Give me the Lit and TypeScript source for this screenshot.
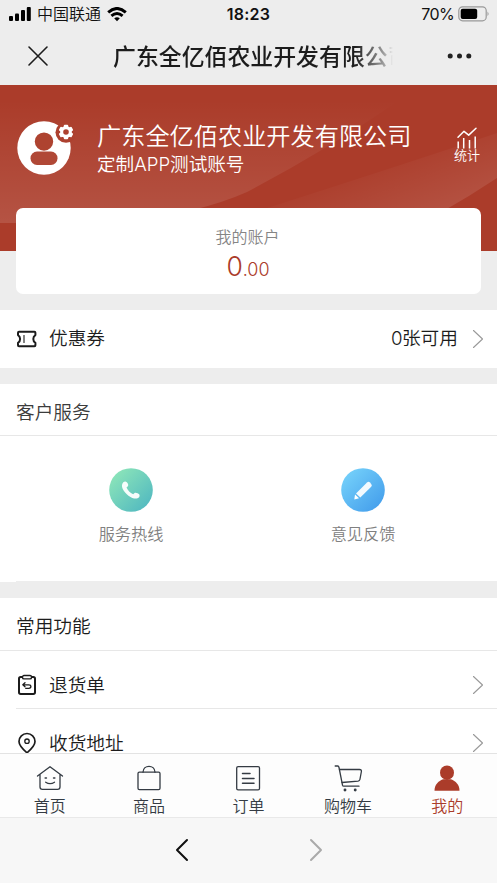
import { LitElement, html, svg, css } from "lit";
import { customElement } from "lit/decorators.js";
import { classMap } from "lit/directives/class-map.js";

const couponIcon = svg`<path d="M3 3.800h15.400q1 0 1 1v2.300q-2.100 1.200-2.100 3.900t2.100 3.900v2.300q0 1-1 1H3q-1 0-1-1v-2.300q2.100-1.200 2.100-3.900T2 7.100V4.800q0-1 1-1z"/><path d="M8 7.500v7" stroke-width="1.100"/>`;
const returnIcon = svg`<rect x="3" y="3" width="16" height="17" rx="1.700"/><rect x="6.500" y="1.500" width="9" height="3.400" rx="1.500" fill="#fff" stroke-width="1.400"/><path d="M9 8.800 6.800 10.800l2.200 2M7 10.800h5.800q2.100 0 2.100 1.800t-2.100 1.800h-3" stroke-width="1.300"/>`;
const pinIcon = svg`<path d="M11 20.800C7.500 17.800 3 13.900 3 9.500a8 8 0 0 1 16 0c0 4.400-4.500 8.300-8 11.300z" stroke-width="1.700"/><circle cx="11" cy="9.200" r="2.200" stroke-width="1.300"/>`;

const tabs = [
  { label: "首页", icon: svg`<path d="M2.500 11 15 1.700 27.500 11M5 9.400V22q0 2.400 2.400 2.400h15.200Q25 24.400 25 22V9.400"/><path d="M10.700 17.200q4.300 3 8.800 0"/><path d="M10.200 13h1.200M18.600 13h1.200" stroke-width="1.600"/>` },
  { label: "商品", icon: svg`<rect x="4" y="7.200" width="22" height="17.400" rx="1.400"/><path d="M9 7.200C9.300-.6 20.700-.6 21 7.200"/>` },
  { label: "订单", icon: svg`<rect x="3.700" y="1.700" width="22.800" height="23.200" rx="1.400"/><path d="M9.500 8.500h7.500M9.500 13.500h11.500M9.500 18.300h11.500" stroke-width="1.500"/>` },
  { label: "购物车", icon: svg`<path d="M2.200 1h2.500q1 0 1.300 1.500L9.500 20.200q.3 1 1.300 1H26"/><path d="M6.500 4.500h20q2.200 0 1.900 2l-1.500 8q-.3 1.500-1.900 1.700L9 17.500"/><circle cx="12" cy="25" r=".8" fill="currentColor"/><circle cx="22.200" cy="25" r=".8" fill="currentColor"/>` },
  { label: "我的", active: true, icon: svg`<g fill="currentColor" stroke="none"><ellipse cx="15" cy="7.700" rx="7" ry="7.200"/><path d="M2.500 25.700c0-6.200 3.900-9.400 8.500-11.400h8c4.600 2 8.500 5.200 8.500 11.400z"/></g>` },
];

@customElement("app-root")
export class AppRoot extends LitElement {
  static styles = css`
    :host { display: flex; flex-direction: column; width: 100%; height: 883px; overflow: hidden; background: #ededed; color: #1c1c1c;
      font-family: Inter, "Noto Sans CJK SC", sans-serif; font-size: 18.700px; line-height: 1; font-weight: 350; }
    * { box-sizing: border-box; }
    svg { display: block; flex: none; fill: none; stroke: currentColor; stroke-linecap: round; stroke-linejoin: round; }
    .status { height: 28px; flex: none; display: grid; grid-template-columns: 1fr auto 1fr; align-items: center; padding: 0 8px; font-size: 16px; color: #111; font-weight: 400; }
    .left, .right { display: flex; align-items: center; }
    .left { gap: 6px; }
    .carrier { font-weight: 350; }
    .right { justify-content: flex-end; gap: 4px; letter-spacing: -.6px; }
    .time { font-weight: 600; letter-spacing: .2px; }
    .nav { height: 57px; flex: none; display: flex; align-items: center; padding: 0 25px 2px 27px; }
    .title { width: 280px; margin: 2px auto 0 64px; overflow: hidden; white-space: nowrap; font-size: 22.900px; line-height: 34px; font-weight: 500; color: #1c1c1c;
      -webkit-mask-image: linear-gradient(90deg, #000 242px, rgba(0, 0, 0, .4) 270px, transparent 280px); }
    .hero { height: 166px; flex: none; position: relative; background: #ab3c2a; color: #fff; }
    .art { position: absolute; inset: 0; stroke: none; }
    .profile { position: relative; height: 123px; display: flex; padding: 0 16px; }
    .avatar { margin-top: 34px; }
    .names { margin: 39px auto 0 22px; white-space: nowrap; }
    .company { font-size: 24.200px; line-height: 25px; }
    .account { font-size: 18.600px; line-height: 22px; margin-top: 4px; }
    .stats { margin: 42px 1px 0 0; width: 26px; display: flex; flex-direction: column; align-items: center; font-size: 13px; white-space: nowrap; }
    .card { position: relative; height: 86px; flex: none; margin: -43px 16px 16px; border-radius: 7px; background: #fff; text-align: center; padding-top: 19px; }
    .caption { font-size: 16px; line-height: 20px; color: #858585; margin-left: -2px; }
    .amount { color: #ab3c2a; font-size: 26.500px; line-height: 32px; margin: 3px 0 0 -1px; }
    .cents { font-size: 18px; }
    .row { height: 58px; flex: none; display: flex; align-items: center; background: #fff; padding: 0 13px 0 16px; }
    .label { margin: 0 auto 0 11px; }
    .value { margin-right: 14px; }
    .digit { letter-spacing: -.7px; }
    .chevron { color: #999; }
    .gap { height: 16px; flex: none; }
    .heading { height: 52px; flex: none; padding: 7px 16px 0; display: flex; align-items: center; background: #fff; border-bottom: 1px solid #e7e7e7; }
    .heading.tall { height: 53px; }
    .soft { color: #3c3c3c; }
    .services { height: 145px; flex: none; display: grid; grid-template-columns: 232px 232px; padding-left: 15px; background: #fff; }
    .service { display: flex; flex-direction: column; align-items: center; gap: 14px; padding-top: 32px; color: #808080; font-size: 16.200px; }
    .service svg { stroke: none; }
    .band { height: 17px; flex: none; }
    .notch { width: 16px; height: 1px; background: #fff; }
    .list { height: 102px; flex: none; overflow: hidden; background: #fff; }
    .rule { height: 1px; margin-left: 16px; background: #e7e7e7; }
    .list .row { height: 57px; padding-top: 10px; }
    .list .row.next { height: 58px; }
    .list .label { padding-top: 3px; }
    .tabs { height: 65px; flex: none; display: grid; grid-template-columns: repeat(5, 1fr); background: #fdfdfd; border-top: 1px solid #e3e3e3; border-bottom: 1px solid #e9e9e9; }
    .tab { display: flex; flex-direction: column; align-items: center; gap: 6px; padding-top: 11px; font-size: 16px; color: #343b43; }
    .tab.active { color: #ab3c2a; }
    .browser { flex: 1; background: #f7f7f7; display: flex; justify-content: center; align-items: center; gap: 120px; padding-bottom: 1px; }
    .back { color: #111; }
    .forward { color: #aaa; }
  `;

  chevron() {
    return html`<svg class="chevron" width="12" height="20" viewBox="0 0 12 20" stroke-width="1.1"><path d="m1.500 1.500 9 8.500-9 8.500"/></svg>`;
  }

  icon(shape: unknown) {
    return html`<svg width="22" height="22" viewBox="0 0 22 22" stroke-width="2">${shape}</svg>`;
  }

  render() {
    return html`
      <div class="status">
        <div class="left">
          <svg width="23" height="16" viewBox="0 0 23 16"><g fill="#000" stroke="none"><rect x="1" y="10" width="4" height="5" rx="1"/><rect x="7" y="7.500" width="4" height="7.500" rx="1"/><rect x="13" y="4" width="4" height="11" rx="1"/><rect x="18.800" y="1" width="4" height="14" rx="1"/></g></svg>
          <span class="carrier">中国联通</span>
          <svg width="20" height="15" viewBox="0 0 20 15" stroke-width="2.900"><g stroke="#000" stroke-linecap="butt"><path d="M1.200 5.400Q10-2.500 18.800 5.400M4.400 8.900Q10 4 15.600 8.900"/><path d="M7.200 11.300Q10 9 12.800 11.300L10 14.200z" fill="#000" stroke="none"/></g></svg>
        </div>
        <span class="time">18:23</span>
        <div class="right"><span>70%</span>
          <svg width="31" height="16" viewBox="0 0 31 16"><rect x=".8" y=".8" width="27.400" height="14" rx="3.800" stroke="#999" stroke-width="1.200"/><rect x="2.700" y="2.700" width="16.500" height="10.200" rx="2" fill="#000" stroke="none"/><path d="M29.500 5.500q2.200 2.300 0 4.600z" fill="#999" stroke="none"/></svg>
        </div>
      </div>
      <div class="nav">
        <svg width="22" height="22" viewBox="0 0 22 22" stroke="#222" stroke-width="1.600"><path d="m2 2 18 18M20 2 2 20"/></svg>
        <div class="title">广东全亿佰农业开发有限公司</div>
        <svg width="25" height="6" viewBox="0 0 25 6"><g fill="#222" stroke="none"><circle cx="3.200" cy="3" r="2.500"/><circle cx="12.500" cy="3" r="2.500"/><circle cx="21.800" cy="3" r="2.500"/></g></svg>
      </div>
      <div class="hero">
        <svg class="art" width="497" height="166" viewBox="0 0 497 166">
          <defs>
            <linearGradient id="veil" x1="0" y1="0" x2="0" y2="1"><stop offset="0" stop-color="#fff" stop-opacity="0"/><stop offset="1" stop-color="#fff" stop-opacity=".12"/></linearGradient>
            <linearGradient id="sweep" gradientUnits="userSpaceOnUse" x1="370" y1="70" x2="400" y2="150"><stop offset="0" stop-color="#fff" stop-opacity="0"/><stop offset="1" stop-color="#fff" stop-opacity=".12"/></linearGradient>
          </defs>
          <path d="M0 15H400Q325 66 247 107 200 128 120 138H0z" fill="url(#veil)"/>
          <path d="M220 138Q390 84 497 48V93Q470 111 440 128L420 138z" fill="url(#sweep)"/>
        </svg>
        <div class="profile">
          <svg class="avatar" width="59" height="57" viewBox="0 0 59 57">
            <g stroke="none"><circle cx="28" cy="29" r="26.700" fill="#fff"/><circle cx="28" cy="22.600" r="9.200" fill="#ae4330"/><rect x="14.500" y="32.500" width="27" height="13.500" rx="6.500" fill="#b04836"/><circle cx="50" cy="13.300" r="10.500" fill="#ad412f"/></g>
            <g transform="translate(50 13)" fill="#fff" stroke="none"><circle r="5.900"/>
              <rect x="-2.200" y="-7.300" width="4.400" height="14.600" rx="1"/><rect x="-2.200" y="-7.300" width="4.400" height="14.600" rx="1" transform="rotate(60)"/><rect x="-2.200" y="-7.300" width="4.400" height="14.600" rx="1" transform="rotate(120)"/><circle r="2.800" fill="#ad412f"/></g>
          </svg>
          <div class="names"><div class="company">广东全亿佰农业开发有限公司</div><div class="account">定制APP测试账号</div></div>
          <div class="stats"><svg width="22" height="22" viewBox="0 0 22 22" stroke-width="1.500"><path d="m2 10.300 6-6 4.700 3.800L20 1.200"/><path d="M2.200 14.500V21.500M7.700 11v10.500M13.500 13v8.500M19.200 9.500v12" stroke-linecap="butt"/></svg><span>统计</span></div>
        </div>
      </div>
      <div class="card"><div class="caption">我的账户</div><div class="amount">0<span class="cents">.00</span></div></div>
      <div class="row">${this.icon(couponIcon)}<span class="label">优惠券</span><span class="value"><span class="digit">0</span>张可用</span>${this.chevron()}</div>
      <div class="gap"></div>
      <div class="heading soft">客户服务</div>
      <div class="services">
        <div class="service">
          <svg width="44" height="44" viewBox="0 0 44 44"><defs><linearGradient id="mint" x1="0" y1="0" x2="1" y2="1"><stop offset=".1" stop-color="#8ce5b9"/><stop offset=".9" stop-color="#52b9c0"/></linearGradient></defs><circle cx="22" cy="22" r="21.800" fill="url(#mint)"/><path d="M14.300 14.200c2-1.300 3.700-.6 4.800 2.100.4 1.500-.2 2.300-1.600 3.200 1.300 3 3.500 5.200 6.700 6.800 1.100-1.700 2.400-2 4.400-1 2 .8 2.600 2.200 1.500 3.900-2.100 2.200-6.100 1.700-10.600-1.500-5.300-4.300-8.500-10-5.200-13.500z" fill="#fff" fill-opacity=".94"/></svg>
          <span>服务热线</span>
        </div>
        <div class="service">
          <svg width="44" height="44" viewBox="0 0 44 44"><defs><linearGradient id="sky" x1="0" y1="0" x2="1" y2="1"><stop offset=".1" stop-color="#74d0fa"/><stop offset=".9" stop-color="#459fec"/></linearGradient></defs><circle cx="22" cy="22" r="21.800" fill="url(#sky)"/><path d="m15 25.500 11-11q1.500-1.300 3 .1l1.200 1.300q1.300 1.500 0 2.800L19.300 29.500z" fill="#fff" fill-opacity=".92"/><path d="m14 26.500 4 3.800-4.700 1.100z" fill="#fff"/></svg>
          <span>意见反馈</span>
        </div>
      </div>
      <div class="band"><div class="notch"></div></div>
      <div class="heading tall">常用功能</div>
      <div class="list">
        <div class="row">${this.icon(returnIcon)}<span class="label">退货单</span>${this.chevron()}</div>
        <div class="rule"></div>
        <div class="row next">${this.icon(pinIcon)}<span class="label">收货地址</span>${this.chevron()}</div>
      </div>
      <div class="tabs">${tabs.map((t) => html`<div class=${classMap({ tab: true, active: !!t.active })}><svg width="30" height="27" viewBox="0 0 30 27" stroke-width="1.300">${t.icon}</svg><span>${t.label}</span></div>`)}</div>
      <div class="browser">
        <svg class="back" width="14" height="24" viewBox="0 0 14 24" stroke-width="2"><path d="M12 2 2 12l10 10"/></svg>
        <svg class="forward" width="14" height="24" viewBox="0 0 14 24" stroke-width="2"><path d="m2 2 10 10L2 22"/></svg>
      </div>`;
  }
}
